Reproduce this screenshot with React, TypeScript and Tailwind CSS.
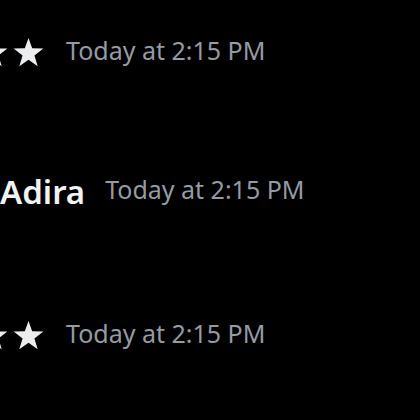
function Star() {
  return (
    <svg width="31" height="29" viewBox="0 0 24 23" className="shrink-0">
      <polygon
        points="12,0 14.9,8.2 23.8,8.4 16.7,13.8 19.3,22.4 12,17.2 4.7,22.4 7.3,13.8 0.2,8.4 9.1,8.2"
        fill="#ebedef"
      />
    </svg>
  );
}

function Timestamp() {
  return <span className="text-[25px] text-[#949ba4] leading-none">Today at 2:15 PM</span>;
}

function StarRow() {
  return (
    <div className="flex items-center h-[40px] -ml-[23px]">
      <div className="flex items-center gap-[5px]">
        <Star />
        <Star />
      </div>
      <div className="ml-[22px]">
        <Timestamp />
      </div>
    </div>
  );
}

export default function App() {
  return (
    <div
      className="w-[420px] h-[420px] bg-black overflow-hidden"
      style={{ fontFamily: '"Noto Sans", sans-serif' }}
    >
      <div className="flex flex-col pt-[32px]">
        <StarRow />
        <div className="flex items-center h-[40px] mt-[99px]">
          <span className="text-[33px] font-semibold text-[#f2f3f5] leading-none">Adira</span>
          <span className="ml-[20px]">
            <Timestamp />
          </span>
        </div>
        <div className="mt-[104px]">
          <StarRow />
        </div>
      </div>
    </div>
  );
}
